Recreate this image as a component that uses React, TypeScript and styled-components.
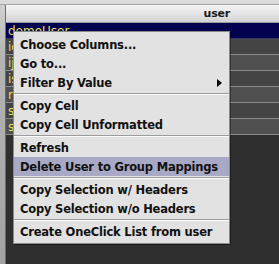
import React from "react";
import styled, { createGlobalStyle } from "styled-components";

const Global = createGlobalStyle`
  html, body { margin: 0; padding: 0; background: #2f2f2f; }
  body { width: 279px; height: 264px; overflow: hidden; }
`;

const Window = styled.div`
  position: relative;
  width: 279px;
  height: 264px;
  display: flex;
  flex-direction: column;
  background: #2f2f2f;
  font-family: "DejaVu Sans", "Liberation Sans", sans-serif;
`;

const TopBar = styled.div`
  height: 4px;
  flex: none;
  background: #dadada;
  border-bottom: 1px solid #a6a6a6;
`;

const Main = styled.div`
  flex: 1;
  display: flex;
  min-height: 0;
`;

const LeftRail = styled.div`
  width: 5px;
  flex: none;
  background: linear-gradient(#d0d0d0, #b4b4b4 20%, #a2a2a2);
  border-right: 1px solid #6c6c6c;
`;

const Table = styled.div`
  flex: 1;
  display: flex;
  flex-direction: column;
  background: #2f2f2f;
`;

const Header = styled.div`
  height: 17px;
  flex: none;
  display: flex;
  align-items: center;
  justify-content: flex-end;
  padding-right: 49px;
  background: linear-gradient(#f4f4f4, #e4e4e4 50%, #d2d2d2);
  border-bottom: 1px solid #9c9c9c;
  font-weight: bold;
  font-size: 11px;
  letter-spacing: -0.2px;
  color: #1a1a1a;
`;

const Row = styled.div<{ $tone: "sel" | "a" | "b" }>`
  height: 15px;
  flex: none;
  display: flex;
  align-items: center;
  padding-left: 2px;
  border-bottom: 1px solid ${(p) => (p.$tone === "sel" ? "#3a3a6a" : "#8a8a8a")};
  background: ${(p) =>
    p.$tone === "sel" ? "#02024e" : p.$tone === "a" ? "#444444" : "#505050"};
  color: #e4dc5c;
  font-size: 12px;
  white-space: nowrap;
  overflow: hidden;
`;

const Menu = styled.div`
  position: absolute;
  left: 13px;
  top: 31px;
  width: 215px;
  padding: 3px 0 2px;
  background: #e2e2e2;
  border: 1px solid #8a8a8a;
  box-shadow: 1px 1px 0 rgba(0, 0, 0, 0.35);
  display: flex;
  flex-direction: column;
`;

const Item = styled.div<{ $active?: boolean }>`
  height: 19px;
  display: flex;
  align-items: center;
  justify-content: space-between;
  padding: 0 7px 0 6px;
  background: ${(p) => (p.$active ? "#a8a9c4" : "transparent")};
  color: #111;
  font-weight: bold;
  font-size: 11.5px;
  letter-spacing: -0.2px;
  white-space: nowrap;
`;

const Arrow = styled.span`
  width: 0;
  height: 0;
  border-top: 4px solid transparent;
  border-bottom: 4px solid transparent;
  border-left: 5px solid #000;
`;

const Sep = styled.div`
  height: 0;
  margin: 1px 0;
  border-top: 1px solid #9c9c9c;
  border-bottom: 1px solid #fbfbfb;
`;

const rows = ["idaniels", "ijones", "ismith", "rlee", "sadams", "sbrown"];

type Entry = { label?: string; sub?: boolean; active?: boolean; sep?: boolean };

const entries: Entry[] = [
  { label: "Choose Columns..." },
  { label: "Go to..." },
  { label: "Filter By Value", sub: true },
  { sep: true },
  { label: "Copy Cell" },
  { label: "Copy Cell Unformatted" },
  { sep: true },
  { label: "Refresh" },
  { label: "Delete User to Group Mappings", active: true },
  { sep: true },
  { label: "Copy Selection w/ Headers" },
  { label: "Copy Selection w/o Headers" },
  { sep: true },
  { label: "Create OneClick List from user" },
];

export default function App() {
  return (
    <>
      <Global />
      <Window>
        <TopBar />
        <Main>
          <LeftRail />
          <Table>
            <Header>user</Header>
            <Row $tone="sel">demoUser</Row>
            {rows.map((r, i) => (
              <Row key={r} $tone={i % 2 === 0 ? "a" : "b"}>
                {r}
              </Row>
            ))}
          </Table>
        </Main>
        <Menu>
          {entries.map((e, i) =>
            e.sep ? (
              <Sep key={i} />
            ) : (
              <Item key={i} $active={e.active}>
                <span>{e.label}</span>
                {e.sub && <Arrow />}
              </Item>
            )
          )}
        </Menu>
      </Window>
    </>
  );
}
